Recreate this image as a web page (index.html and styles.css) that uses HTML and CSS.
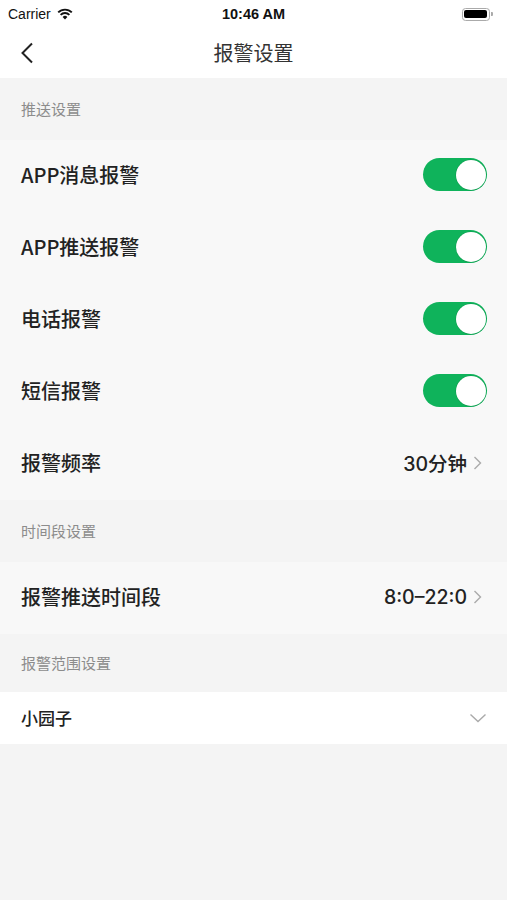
FILE: index.html
```html
<!DOCTYPE html>
<html lang="zh">
<head>
<meta charset="utf-8">
<link rel="stylesheet" href="styles.css">
</head>
<body>
<div class="screen">
  <div class="status">
    <div class="status-left">
      <span class="carrier">Carrier</span>
      <svg class="wifi" width="16" height="12" viewBox="0 0 16 12">
        <path d="M8 11.5 L5.6 8.9 A3.4 3.4 0 0 1 10.4 8.9 Z" fill="#111"/>
        <path d="M3.6 6.9 A6.2 6.2 0 0 1 12.4 6.9" stroke="#111" stroke-width="1.9" fill="none"/>
        <path d="M1.2 4.4 A9.6 9.6 0 0 1 14.8 4.4" stroke="#111" stroke-width="1.9" fill="none"/>
      </svg>
    </div>
    <div class="time">10:46 AM</div>
    <div class="status-right">
      <div class="battery"><div class="battery-fill"></div></div>
      <div class="battery-tip"></div>
    </div>
  </div>

  <div class="navbar">
    <svg class="back" width="14" height="22" viewBox="0 0 14 22">
      <path d="M12 1.5 L2.5 11 L12 20.5" stroke="#222" stroke-width="2" fill="none"/>
    </svg>
    <div class="title">报警设置</div>
  </div>

  <div class="section-head">推送设置</div>
  <div class="row"><span class="label">APP消息报警</span><span class="switch"><span class="knob"></span></span></div>
  <div class="row"><span class="label">APP推送报警</span><span class="switch"><span class="knob"></span></span></div>
  <div class="row"><span class="label">电话报警</span><span class="switch"><span class="knob"></span></span></div>
  <div class="row"><span class="label">短信报警</span><span class="switch"><span class="knob"></span></span></div>
  <div class="row"><span class="label">报警频率</span>
    <span class="value">30分钟<svg class="chev" width="9" height="16" viewBox="0 0 9 16"><path d="M1.5 2 L7.5 8 L1.5 14" stroke="#aaa" stroke-width="1.4" fill="none"/></svg></span>
  </div>

  <div class="section-head">时间段设置</div>
  <div class="row"><span class="label">报警推送时间段</span>
    <span class="value">8:0–22:0<svg class="chev" width="9" height="16" viewBox="0 0 9 16"><path d="M1.5 2 L7.5 8 L1.5 14" stroke="#aaa" stroke-width="1.4" fill="none"/></svg></span>
  </div>

  <div class="section-head short">报警范围设置</div>
  <div class="row white"><span class="label small">小园子</span>
    <svg class="down" width="18" height="10" viewBox="0 0 18 10"><path d="M1.5 1.5 L9 8.5 L16.5 1.5" stroke="#aaa" stroke-width="1.4" fill="none"/></svg>
  </div>
</div>
</body>
</html>
```

FILE: styles.css
```css
* { box-sizing: border-box; }
html, body {
  margin: 0;
  padding: 0;
  background: #f4f4f4;
}
body {
  font-family: "Noto Sans CJK SC", "Noto Sans", sans-serif;
  color: #222;
}
.screen {
  width: 507px;
  min-height: 900px;
  background: #f4f4f4;
}
.status {
  height: 26px;
  background: #fff;
  display: flex;
  align-items: center;
  justify-content: space-between;
  padding: 2px 8px 0 8px;
}
.status-left {
  display: flex;
  align-items: center;
  gap: 6px;
  width: 120px;
}
.carrier {
  font-family: "Liberation Sans", "Noto Sans", sans-serif;
  font-size: 14px;
  color: #111;
}
.time {
  font-family: "Liberation Sans", "Noto Sans", sans-serif;
  font-size: 14.5px;
  font-weight: bold;
  color: #111;
}
.status-right {
  width: 120px;
  display: flex;
  justify-content: flex-end;
  align-items: center;
  padding-right: 6px;
}
.battery {
  width: 28px;
  height: 13px;
  border: 1px solid #aaa;
  border-radius: 3.5px;
  padding: 1.5px;
}
.battery-fill {
  width: 100%;
  height: 100%;
  background: #000;
  border-radius: 2px;
}
.battery-tip {
  width: 2px;
  height: 4px;
  background: #aaa;
  border-radius: 0 1px 1px 0;
  margin-left: 1px;
}
.navbar {
  height: 52px;
  background: #fff;
  display: flex;
  align-items: center;
  justify-content: center;
  position: relative;
}
.back {
  position: absolute;
  left: 20px;
  top: 16px;
}
.title {
  font-size: 20px;
  color: #333;
}
.section-head {
  height: 62px;
  display: flex;
  align-items: center;
  padding: 0 21px 2px;
  font-size: 15px;
  color: #8c8c8c;
  background: #f4f4f4;
}
.section-head.short {
  height: 58px;
}
.row {
  height: 72px;
  display: flex;
  align-items: center;
  justify-content: space-between;
  padding: 0 20px 3px 21px;
  background: #f8f8f8;
}
.row.white {
  height: 52px;
  padding-bottom: 1px;
  background: #fff;
}
.label {
  font-size: 20px;
  font-weight: 500;
  color: #222;
}
.label.small {
  font-size: 17px;
}
.value {
  display: flex;
  align-items: center;
  gap: 6px;
  font-family: "Inter", "Noto Sans CJK SC", sans-serif;
  font-size: 19.5px;
  font-weight: 500;
  color: #222;
}
.chev {
  margin-right: 5px;
}
.switch {
  width: 64px;
  height: 33px;
  border-radius: 17px;
  background: #0fb35b;
  display: flex;
  align-items: center;
  justify-content: flex-end;
  padding: 1.5px;
}
.knob {
  width: 30px;
  height: 30px;
  border-radius: 50%;
  background: #fff;
  box-shadow: 0 0 0 0.5px rgba(10,140,70,0.6);
}
.down {
  margin-right: 0;
}
```
